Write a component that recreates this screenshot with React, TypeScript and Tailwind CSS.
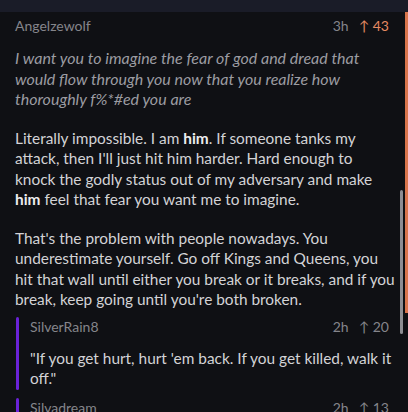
const font = { fontFamily: "Lato, 'Noto Sans', sans-serif" };

function Meta({ time, score, orange }: { time: string; score: string; orange?: boolean }) {
  return (
    <div className="flex items-center gap-[10px] text-[14px] leading-[20px]">
      <span className="text-[#85858b]">{time}</span>
      <span className={orange ? "text-[#e58a62]" : "text-[#85858b]"}>↑ {score}</span>
    </div>
  );
}

function Reply({ user, time, score, text }: { user: string; time: string; score: string; text?: string }) {
  return (
    <div className="flex pl-[16px] pr-[19px]">
      <div className="w-[3px] shrink-0 rounded-sm bg-[#6a22d8]" />
      <div className="flex-1 pl-[11px]">
        <div className="flex items-center justify-between text-[14px] leading-[20px]">
          <span className="text-[#85858b]">{user}</span>
          <Meta time={time} score={score} />
        </div>
        {text && <p className="-mr-[4px] mt-[11px] pb-[1px] text-[15.4px] leading-[20.5px] text-[#d3d3d6]">{text}</p>}
      </div>
    </div>
  );
}

export default function App() {
  return (
    <div className="h-[412px] w-[408px] overflow-hidden bg-[#0f1014]" style={font}>
      <div className="h-[12px] bg-[#1a1c28]" />
      <div className="relative">
        <div className="absolute right-0 top-0 h-[301px] w-[3px] bg-[#d9754c]" />
        <div className="absolute right-[5px] top-[178px] h-[144px] w-[3px] rounded-full bg-[#8d8d92]" />

        <div className="pl-[15px] pr-[17px] pt-[4px]">
          <div className="mr-[2px] flex items-center justify-between text-[14px] leading-[20px]">
            <span className="text-[#85858b]">Angelzewolf</span>
            <Meta time="3h" score="43" orange />
          </div>
          <p className="mt-[12px] text-[16px] italic leading-[20.5px] text-[#9c9ca2]">
            I want you to imagine the fear of god and dread that would flow through you now that you realize how
            thoroughly f%*#ed you are
          </p>
          <p className="-mr-[4px] mt-[18px] text-[15.4px] leading-[20.5px] text-[#d3d3d6]">
            Literally impossible. I am <b className="font-bold text-[#ececee]">him</b>. If someone tanks my attack, then
            I'll just hit him harder. Hard enough to knock the godly status out of my adversary and make{" "}
            <b className="font-bold text-[#ececee]">him</b> feel that fear you want me to imagine.
          </p>
          <p className="-mr-[4px] mt-[18px] text-[15.4px] leading-[20.5px] text-[#d3d3d6]">
            That's the problem with people nowadays. You underestimate yourself. Go off Kings and Queens, you hit that
            wall until either you break or it breaks, and if you break, keep going until you're both broken.
          </p>
        </div>

        <div className="mt-[7px] flex flex-col gap-[8px]">
          <Reply
            user="SilverRain8"
            time="2h"
            score="20"
            text={`"If you get hurt, hurt 'em back. If you get killed, walk it off."`}
          />
          <Reply user="Silvadream" time="2h" score="13" />
        </div>
      </div>
    </div>
  );
}
